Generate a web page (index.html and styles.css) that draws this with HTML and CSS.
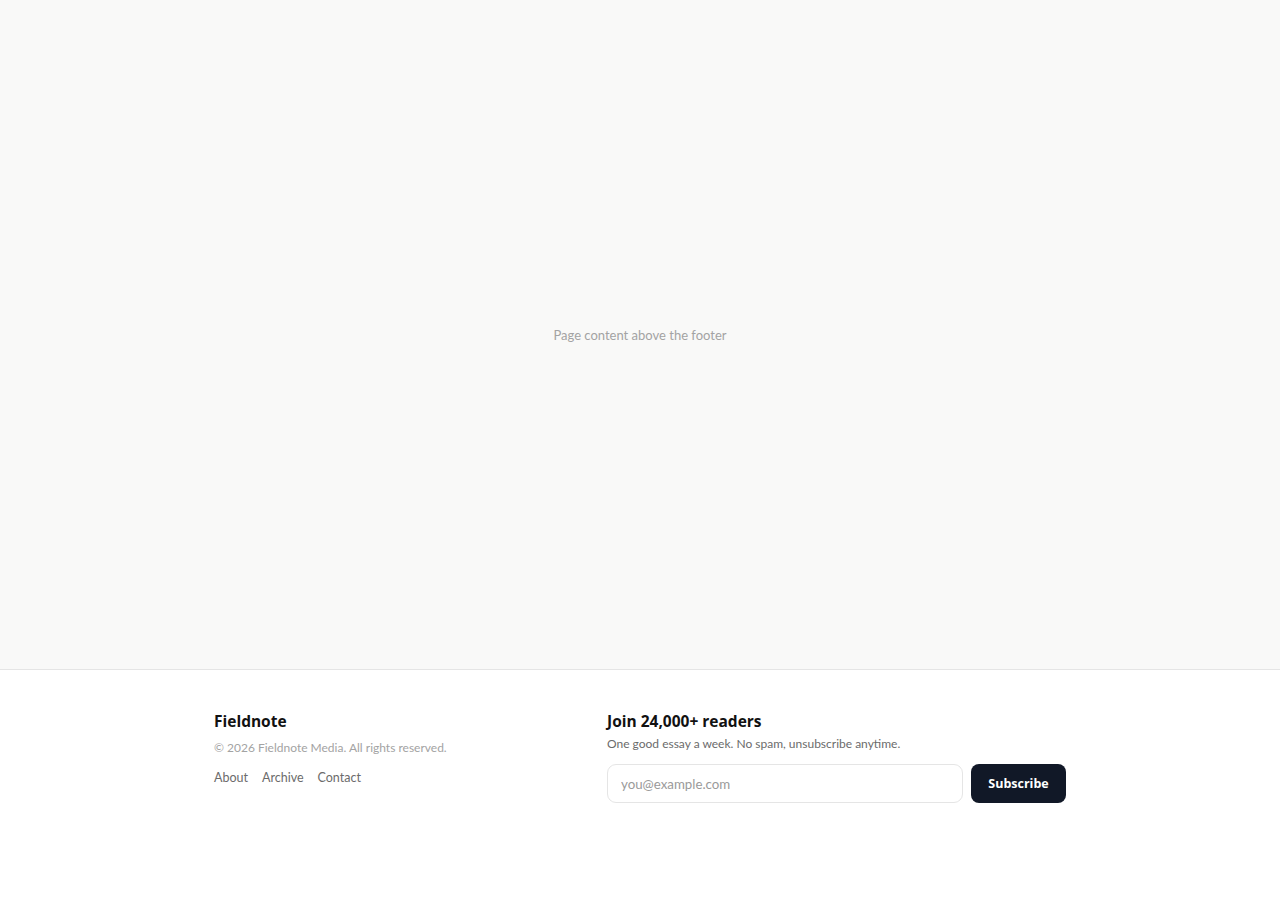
FILE: index.html
```html
<!DOCTYPE html>
<html lang="en">
<head>
<meta charset="utf-8">
<title>Fieldnote</title>
<link rel="stylesheet" href="styles.css">
</head>
<body>
<main class="page">
  <p class="placeholder">Page content above the footer</p>
</main>
<footer class="footer">
  <div class="footer-inner">
    <div class="brand">
      <div class="brand-name">Fieldnote</div>
      <p class="copyright">© 2026 Fieldnote Media. All rights reserved.</p>
      <nav class="links">
        <a href="#">About</a>
        <a href="#">Archive</a>
        <a href="#">Contact</a>
      </nav>
    </div>
    <div class="newsletter">
      <h2 class="nl-title">Join 24,000+ readers</h2>
      <p class="nl-sub">One good essay a week. No spam, unsubscribe anytime.</p>
      <form class="nl-form">
        <input class="nl-input" type="email" placeholder="you@example.com">
        <button class="nl-button" type="button">Subscribe</button>
      </form>
    </div>
  </div>
</footer>
</body>
</html>
```

FILE: styles.css
```css
* { box-sizing: border-box; }
html, body { margin: 0; padding: 0; }
body {
  font-family: Lato, "Open Sans", sans-serif;
  background: #ffffff;
  color: #111827;
}
.page {
  height: 669px;
  background: #f9f9f8;
  display: flex;
  align-items: center;
  justify-content: center;
}
.placeholder {
  margin: 0;
  font-size: 13px;
  color: #a3a3a3;
}
.footer {
  border-top: 1px solid #e5e5e5;
  background: #ffffff;
  padding: 40px 24px;
}
.footer-inner {
  max-width: 852px;
  margin: 0 auto;
  display: flex;
  justify-content: space-between;
}
.brand-name {
  font-family: "Open Sans", Lato, sans-serif;
  font-size: 15.5px;
  font-weight: 700;
  color: #111111;
  line-height: 22px;
}
.copyright {
  margin: 7px 0 0;
  font-size: 12px;
  color: #a3a3a3;
  line-height: 18px;
}
.links {
  display: flex;
  gap: 14px;
  margin-top: 12px;
}
.links a {
  font-size: 12.5px;
  color: #6b6b6b;
  text-decoration: none;
  line-height: 18px;
}
.newsletter {
  width: 459px;
}
.nl-title {
  margin: 0;
  font-family: "Open Sans", Lato, sans-serif;
  font-size: 15.5px;
  font-weight: 700;
  color: #111111;
  line-height: 22px;
}
.nl-sub {
  margin: 3px 0 0;
  font-size: 12px;
  color: #6b6b6b;
  line-height: 18px;
}
.nl-form {
  display: flex;
  gap: 8px;
  margin-top: 11px;
}
.nl-input {
  flex: 1;
  height: 39px;
  border: 1px solid #e5e5e5;
  border-radius: 9px;
  padding: 0 13px;
  font-family: inherit;
  font-size: 13.3px;
  color: #111;
  background: #fff;
  outline: none;
}
.nl-input::placeholder { color: #9a9a9a; }
.nl-button {
  width: 95px;
  height: 39px;
  border: 0;
  border-radius: 8px;
  background: #111827;
  color: #ffffff;
  font-family: "Open Sans", Lato, sans-serif;
  font-size: 12.5px;
  font-weight: 700;
  cursor: pointer;
}
```
